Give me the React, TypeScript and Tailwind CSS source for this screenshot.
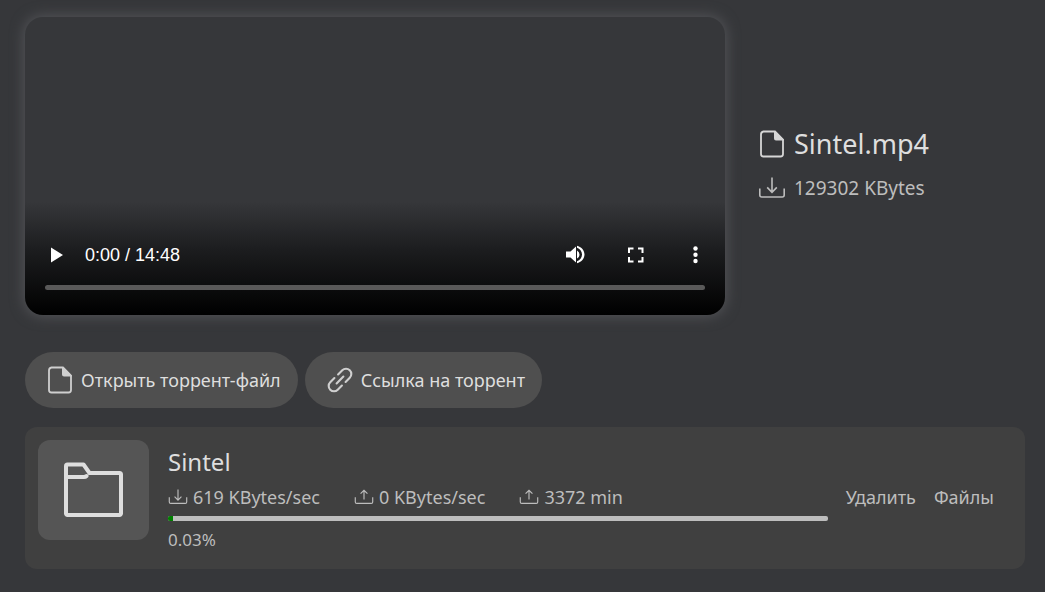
import React from "react";

type IconProps = { className?: string };

function FileIcon({ className }: IconProps) {
  return (
    <svg viewBox="0 0 26 28" className={className} fill="none" aria-hidden="true">
      <path d="M4.500 1.500h11.500l8 8V24a2.500 2.500 0 0 1-2.500 2.500h-17A2.500 2.500 0 0 1 2 24V4.500A3 3 0 0 1 4.500 1.500Z" stroke="currentColor" strokeWidth="1.8" />
      <path d="M15 1.200h1.400l8.400 8.400v1h-7.800a2 2 0 0 1-2-2Z" fill="currentColor" />
    </svg>
  );
}

function TransferIcon({ className, up = false }: IconProps & { up?: boolean }) {
  return (
    <svg viewBox="0 0 28 22" className={className} fill="none" stroke="currentColor" strokeWidth="1.6" aria-hidden="true">
      <path d="M1.8 11.5V18a2 2 0 0 0 2 2h20.4a2 2 0 0 0 2-2v-6.500" />
      {up ? <path d="M14 14.500V1.800M9.200 6.400 14 1.600l4.800 4.800" /> : <path d="M14 .5v14.700M9.200 10.400l4.800 4.900 4.800-4.900" />}
    </svg>
  );
}

function ChainIcon({ className }: IconProps) {
  return (
    <svg viewBox="-13 -13 26 26" className={className} fill="none" stroke="currentColor" strokeWidth="2.100" strokeLinecap="round" aria-hidden="true">
      <g transform="rotate(-45)">
        <path d="M-4.800 0h9.600M2.600-5.300H8.500a5.300 5.300 0 0 1 0 10.600H2.600M-2.600 5.300H-8.500a5.300 5.300 0 0 1 0-10.600h5.900" />
      </g>
    </svg>
  );
}

function FolderIcon({ className }: IconProps) {
  return (
    <svg viewBox="0 0 60 56" className={className} fill="none" stroke="currentColor" strokeWidth="4" strokeLinecap="round" strokeLinejoin="round" aria-hidden="true">
      <path d="M3.500 2.500H19.500L25.500 11H55.500a1.500 1.500 0 0 1 1.500 1.500V51.500a1.500 1.500 0 0 1-1.500 1.500H3.500a1.500 1.500 0 0 1-1.500-1.500V4A1.500 1.500 0 0 1 3.500 2.500ZM2.500 15H20q1.500 0 2.500-1" />
    </svg>
  );
}

function Player() {
  return (
    <section
      aria-label="Sintel.mp4"
      className="flex aspect-[350/149] w-[70%] flex-col justify-end overflow-hidden rounded-[18px] bg-[#36373a] bg-linear-to-b/srgb from-[#36373a] from-62% via-[#1c1d1f] via-78% to-black to-100% px-5 pb-[25px] text-white shadow-[0_0_14px_1px_#55565a]"
    >
      <div className="flex items-center">
        <button type="button" aria-label="Play" className="flex size-6 items-center justify-center">
          <svg viewBox="0 0 24 24" className="size-6" fill="currentColor"><path d="M6 4.500v15L18 12Z" /></svg>
        </button>
        <span className="ml-4 font-['Liberation_Sans',sans-serif] text-lg leading-6">0:00 / 14:48</span>
        <div className="ml-auto flex gap-9">
          <button type="button" aria-label="Mute">
            <svg viewBox="0 0 24 24" className="size-6" fill="currentColor"><path d="M3 8.500v6h4.500l5.500 5V3.500l-5.500 5H3zm13.500 3A4.500 4.500 0 0 0 14 7.470v8.050c1.480-.73 2.500-2.250 2.500-4.020zM14 2.730v2.060c2.890.86 5 3.540 5 6.710s-2.110 5.850-5 6.710v2.060c4.010-.91 7.500-4.490 7.500-8.770s-3.490-7.860-7.500-8.770z" /></svg>
          </button>
          <button type="button" aria-label="Full screen">
            <svg viewBox="0 0 24 24" className="size-6" fill="none" stroke="currentColor" strokeWidth="2"><path d="M6 10V5.500h4.500M15 5.500h4.500V10M19.500 14v4.500H15M10.500 18.500H6V14" /></svg>
          </button>
          <button type="button" aria-label="More options" className="-mr-[2px]">
            <svg viewBox="0 0 24 24" className="size-6" fill="currentColor"><circle cx="12.500" cy="5.500" r="2.200" /><circle cx="12.500" cy="11.800" r="2.200" /><circle cx="12.500" cy="18" r="2.200" /></svg>
          </button>
        </div>
      </div>
      <input
        type="range"
        min="0"
        max="888"
        defaultValue="0"
        aria-label="Seek"
        className="mt-[18px] block h-[5px] w-full appearance-none rounded-full bg-[#595959] [&::-webkit-slider-thumb]:appearance-none"
      />
    </section>
  );
}

const pill = "flex h-14 items-center gap-2 rounded-full bg-[#4f4f4f] pl-[22px] pr-[17px] text-[#dedede]";

export default function App() {
  return (
    <div className="min-h-screen bg-[#36373a] pt-[17px] pr-5 pb-[23px] pl-[25px] font-['Noto_Sans',sans-serif] text-lg leading-6 text-[#bdbdbd]">
      <div className="flex items-center">
        <Player />
        <div className="mb-[6px] ml-[33px] grid grid-cols-[28px_auto] items-center gap-x-2 gap-y-[14px]">
          <FileIcon className="h-7 w-[26px] justify-self-center text-[#d6d6d6]" />
          <h1 className="text-[27px] leading-9 text-[#dedede]">Sintel.mp4</h1>
          <TransferIcon className="h-[22px] w-7" />
          <p className="text-[19px]">129302 KBytes</p>
        </div>
      </div>

      <div className="mt-[37px] flex gap-[7px]">
        <button type="button" className={pill}>
          <FileIcon className="h-7 w-[26px] text-[#cfcfcf]" />
          Открыть торрент-файл
        </button>
        <button type="button" className={pill}>
          <ChainIcon className="size-[26px] text-[#cfcfcf]" />
          Ссылка на торрент
        </button>
      </div>

      <section className="mt-[19px] flex rounded-xl bg-[#404040] p-[13px] pb-[17px]">
        <div className="flex h-[100px] w-[111px] shrink-0 items-center justify-center rounded-xl bg-[#555555]">
          <FolderIcon className="h-14 w-[60px] text-[#dedede]" />
        </div>
        <div className="ml-[19px] flex-1 pt-[6px]">
          <h2 className="text-2xl leading-8 text-[#dedede]">Sintel</h2>
          <div className="mt-[7px] flex gap-[34px]">
            <span className="flex items-center gap-[5px]"><TransferIcon className="h-4 w-5" />619 KBytes/sec</span>
            <span className="flex items-center gap-[5px]"><TransferIcon up className="h-4 w-5" />0 KBytes/sec</span>
            <span className="flex items-center gap-[5px]"><TransferIcon up className="h-4 w-5" />3372 min</span>
          </div>
          <div role="progressbar" aria-label="Sintel" aria-valuenow={0.03} aria-valuemin={0} aria-valuemax={100} className="mt-[7px] h-[5px] overflow-hidden rounded-[2px] bg-[#bdbdbd]">
            <div className="h-full w-[5px] bg-[#008000]" />
          </div>
          <p className="mt-[7px] text-[17px]">0.03%</p>
        </div>
        <div className="mr-[18px] ml-[18px] flex items-center gap-[18px] pt-[2px]">
          <button type="button">Удалить</button>
          <button type="button">Файлы</button>
        </div>
      </section>
    </div>
  );
}
